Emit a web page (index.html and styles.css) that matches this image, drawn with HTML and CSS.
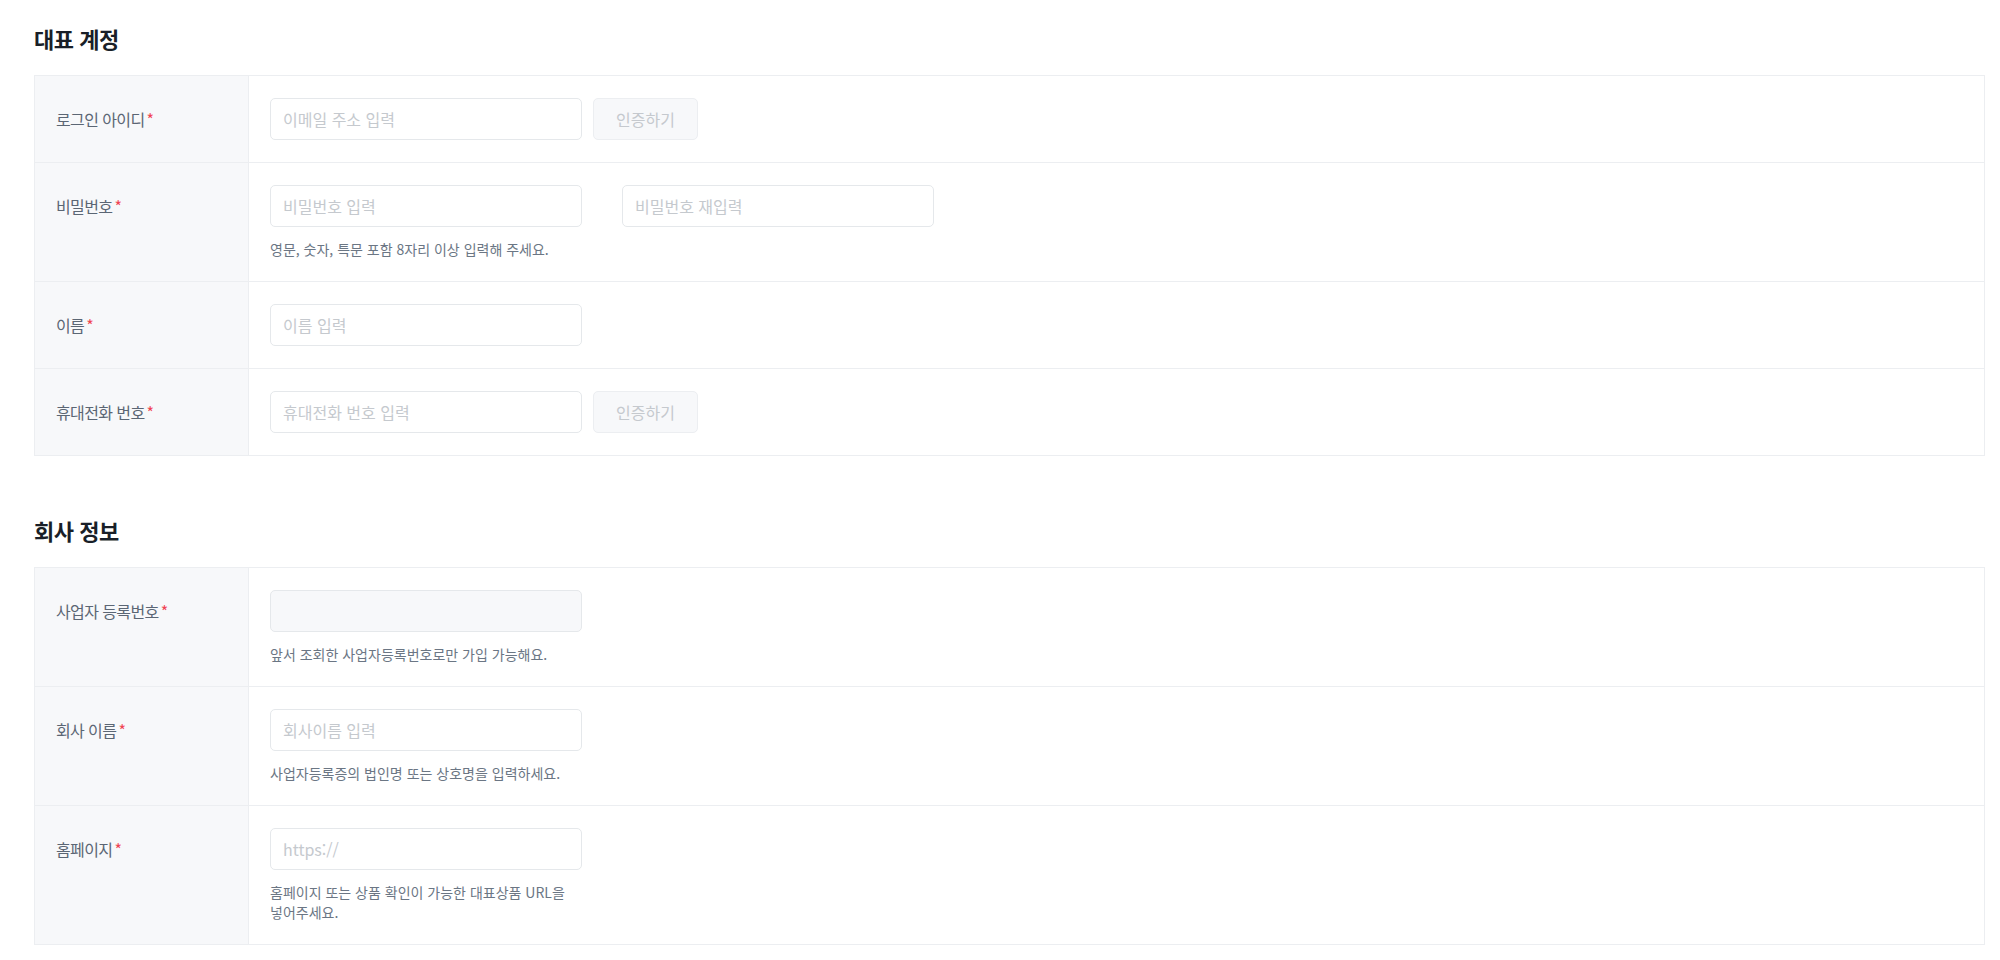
FILE: index.html
```html
<!DOCTYPE html>
<html lang="ko">
<head>
    <meta charset="UTF-8">
    <meta name="viewport" content="width=device-width, initial-scale=1.0">
    <title>회원가입</title>
    <link rel="stylesheet" href="styles.css">
</head>
<body>
    <section class="section">
        <h2 class="sectionTitle">대표 계정</h2>
        <div class="table">
            <div class="row">
                <div class="label">로그인 아이디<span class="req">*</span></div>
                <div class="field">
                    <div class="inputs">
                        <input class="input" type="text" placeholder="이메일 주소 입력">
                        <button class="verify" type="button">인증하기</button>
                    </div>
                </div>
            </div>
            <div class="row">
                <div class="label">비밀번호<span class="req">*</span></div>
                <div class="field">
                    <div class="inputs wide">
                        <input class="input" type="password" placeholder="비밀번호 입력">
                        <input class="input" type="password" placeholder="비밀번호 재입력">
                    </div>
                    <p class="help">영문, 숫자, 특문 포함 8자리 이상 입력해 주세요.</p>
                </div>
            </div>
            <div class="row">
                <div class="label">이름<span class="req">*</span></div>
                <div class="field">
                    <div class="inputs">
                        <input class="input" type="text" placeholder="이름 입력">
                    </div>
                </div>
            </div>
            <div class="row">
                <div class="label">휴대전화 번호<span class="req">*</span></div>
                <div class="field">
                    <div class="inputs">
                        <input class="input" type="tel" placeholder="휴대전화 번호 입력">
                        <button class="verify" type="button">인증하기</button>
                    </div>
                </div>
            </div>
        </div>
    </section>

    <section class="section company">
        <h2 class="sectionTitle">회사 정보</h2>
        <div class="table">
            <div class="row">
                <div class="label">사업자 등록번호<span class="req">*</span></div>
                <div class="field">
                    <div class="inputs">
                        <input class="input" type="text" disabled>
                    </div>
                    <p class="help">앞서 조회한 사업자등록번호로만 가입 가능해요.</p>
                </div>
            </div>
            <div class="row">
                <div class="label">회사 이름<span class="req">*</span></div>
                <div class="field">
                    <div class="inputs">
                        <input class="input" type="text" placeholder="회사이름 입력">
                    </div>
                    <p class="help">사업자등록증의 법인명 또는 상호명을 입력하세요.</p>
                </div>
            </div>
            <div class="row">
                <div class="label">홈페이지<span class="req">*</span></div>
                <div class="field">
                    <div class="inputs">
                        <input class="input" type="url" placeholder="https://">
                    </div>
                    <p class="help">홈페이지 또는 상품 확인이 가능한 대표상품 URL을<br>넣어주세요.</p>
                </div>
            </div>
        </div>
    </section>
</body>
</html>
```

FILE: styles.css
```css
* {
    box-sizing: border-box;
}
body {
    margin: 0;
    padding: 24px 15px 0 34px;
    background: #fff;
    font-family: "Noto Sans CJK KR", "Noto Sans", sans-serif;
    color: #191f28;
}
.section {
    margin: 0;
}
.company {
    margin-top: 60px;
}
.sectionTitle {
    margin: 0 0 23px;
    font-size: 22px;
    line-height: 28px;
    font-weight: 700;
    letter-spacing: -0.5px;
    color: #191f28;
}
.table {
    border: 1px solid #eceef1;
    border-bottom: none;
}
.row {
    display: flex;
    border-bottom: 1px solid #eceef1;
}
.label {
    width: 214px;
    flex-shrink: 0;
    padding: 22px 0 22px 21px;
    background-color: #f7f8fa;
    border-right: 1px solid #eceef1;
    font-size: 16px;
    line-height: 42px;
    letter-spacing: -0.6px;
    color: #5b6674;
}
.req {
    color: #f04452;
    margin-left: 2px;
}
.field {
    flex: 1;
    padding: 22px 21px;
}
.inputs {
    display: flex;
    gap: 11px;
}
.inputs.wide {
    gap: 40px;
}
.input {
    width: 312px;
    height: 42px;
    padding: 0 12px;
    border: 1px solid #e5e8eb;
    border-radius: 5px;
    background: #fff;
    font-family: inherit;
    font-size: 16px;
    color: #333d4b;
    outline: none;
}
.input::placeholder {
    color: #c5c9ce;
}
.input:disabled {
    background-color: #f7f8fa;
}
.verify {
    height: 42px;
    padding: 0 22px;
    border: 1px solid #eceef1;
    border-radius: 5px;
    background-color: #f7f8fa;
    font-family: inherit;
    font-size: 16px;
    color: #c5c9ce;
    cursor: pointer;
}
.help {
    margin: 12px 0 0;
    font-size: 14px;
    line-height: 20px;
    color: #6b7684;
}
```
